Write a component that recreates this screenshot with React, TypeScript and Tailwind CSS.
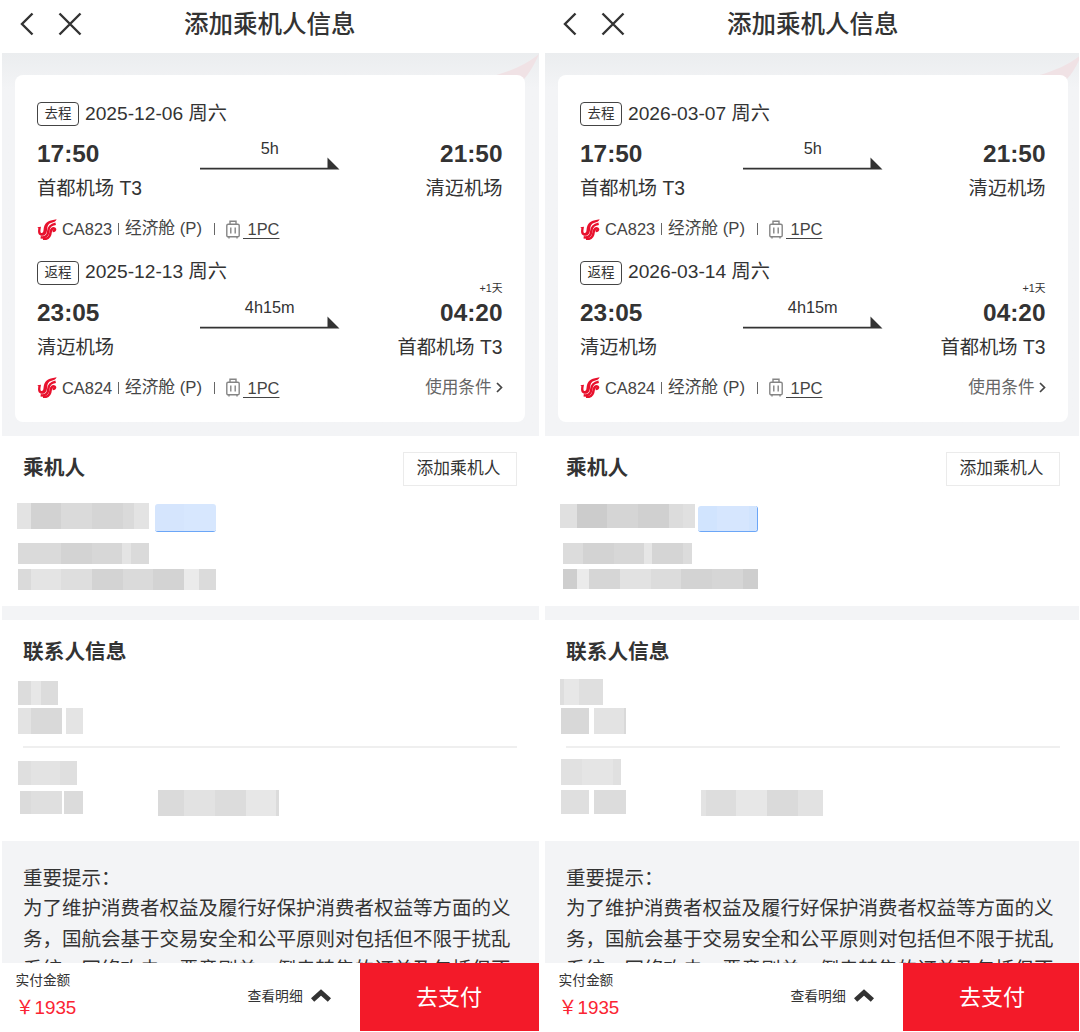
import React from "react";

type TLeg = {
  tag: string;
  date: string;
  from: string;
  to: string;
  depart: string;
  arrive: string;
  duration: string;
  flight: string;
  nextDay?: boolean;
  rules?: boolean;
};

// one masked strip, cells are [width, color]
type TRun = { ml: number; mt?: number; h: number; cells: [number, string][]; blue?: string };
type TRow = { h: number; mt: number; runs: TRun[] };

type TOrder = { legs: TLeg[]; passenger: TRow[]; contactTop: TRow[]; contactBottom: TRow[] };

const makeLegs = (out: string, back: string): TLeg[] => [
  { tag: "去程", date: out, from: "首都机场 T3", to: "清迈机场", depart: "17:50", arrive: "21:50", duration: "5h", flight: "CA823" },
  { tag: "返程", date: back, from: "清迈机场", to: "首都机场 T3", depart: "23:05", arrive: "04:20", duration: "4h15m", flight: "CA824", nextDay: true, rules: true },
];

const orders: TOrder[] = [
  {
    legs: makeLegs("2025-12-06 周六", "2025-12-13 周六"),
    passenger: [
      {
        mt: 3, h: 29,
        runs: [
          { ml: 15, h: 26, cells: [[14, "#e3e3e3"], [30, "#d2d2d2"], [31, "#dadada"], [31, "#d5d5d5"], [11, "#dadada"], [15, "#e3e3e3"]] },
          { ml: 6, mt: 1, h: 28, blue: "border-b-[1.5px] border-[#6ba6f7]", cells: [[29, "#d5e5fd"], [32, "#d7e7fe"]] },
        ],
      },
      { mt: 11, h: 21, runs: [{ ml: 16, h: 21, cells: [[43, "#dadada"], [31, "#d3d3d3"], [30, "#d7d7d7"], [9, "#e4e4e4"], [18, "#dadada"]] }] },
      { mt: 5, h: 21, runs: [{ ml: 16, h: 21, cells: [[13, "#dadada"], [30, "#e4e4e4"], [31, "#dedede"], [31, "#d3d3d3"], [30, "#dadada"], [31, "#d3d3d3"], [15, "#ebebeb"], [17, "#dbdbdb"]] }] },
    ],
    contactTop: [
      { mt: 6, h: 24, runs: [{ ml: 16, h: 24, cells: [[13, "#dcdcdc"], [10, "#e7e7e7"], [17, "#dcdcdc"]] }] },
      { mt: 3, h: 27, runs: [{ ml: 16, h: 26, cells: [[13, "#e3e3e3"], [31, "#d9d9d9"]] }, { ml: 4, h: 26, cells: [[17, "#e4e4e4"]] }] },
    ],
    contactBottom: [
      { mt: 13, h: 24, runs: [{ ml: 16, h: 24, cells: [[13, "#dfdfdf"], [29, "#e3e3e3"], [17, "#dfdfdf"]] }] },
      {
        mt: 5, h: 26,
        runs: [
          { ml: 18, mt: 1, h: 23, cells: [[11, "#dbdbdb"], [31, "#dfdfdf"]] },
          { ml: 2, mt: 1, h: 23, cells: [[19, "#dbdbdb"]] },
          { ml: 75, h: 26, cells: [[26, "#dadada"], [31, "#e2e2e2"], [31, "#dcdcdc"], [30, "#e7e7e7"], [3, "#dbdbdb"]] },
        ],
      },
    ],
  },
  {
    legs: makeLegs("2026-03-07 周六", "2026-03-14 周六"),
    passenger: [
      {
        mt: 3, h: 29,
        runs: [
          { ml: 15, mt: 1, h: 24, cells: [[17, "#e0e0e0"], [30, "#cccccc"], [31, "#d5d5d5"], [31, "#d0d0d0"], [14, "#dcdcdc"], [12, "#e0e0e0"]] },
          { ml: 3, mt: 3, h: 26, blue: "border-b-[1.5px] border-r-[1.5px] border-[#6ba6f7]", cells: [[19, "#d1e4fe"], [32, "#d6e6fe"], [8, "#d1e4fe"]] },
        ],
      },
      { mt: 11, h: 21, runs: [{ ml: 18, h: 21, cells: [[20, "#dcdcdc"], [31, "#d3d3d3"], [30, "#d7d7d7"], [8, "#e6e6e6"], [31, "#d5d5d5"], [9, "#dcdcdc"]] }] },
      { mt: 5, h: 21, runs: [{ ml: 18, h: 20, cells: [[14, "#cecece"], [12, "#ebebeb"], [31, "#d6d6d6"], [31, "#e2e2e2"], [30, "#dcdcdc"], [31, "#d3d3d3"], [31, "#d6d6d6"], [15, "#cecece"]] }] },
    ],
    contactTop: [
      { mt: 4, h: 26, runs: [{ ml: 15, h: 26, cells: [[4, "#dedede"], [15, "#e7e7e7"], [24, "#dfdfdf"]] }] },
      { mt: 3, h: 27, runs: [{ ml: 16, h: 26, cells: [[28, "#d8d8d8"]] }, { ml: 5, h: 26, cells: [[30, "#e3e3e3"], [2, "#d9d9d9"]] }] },
    ],
    contactBottom: [
      { mt: 11, h: 26, runs: [{ ml: 16, h: 26, cells: [[21, "#e1e1e1"], [31, "#e5e5e5"], [8, "#e0e0e0"]] }] },
      {
        mt: 5, h: 26,
        runs: [
          { ml: 16, h: 24, cells: [[28, "#dfdfdf"]] },
          { ml: 5, h: 24, cells: [[32, "#dcdcdc"]] },
          { ml: 75, h: 26, cells: [[5, "#e3e3e3"], [30, "#dddddd"], [31, "#e7e7e7"], [31, "#dadada"], [25, "#e2e2e2"]] },
        ],
      },
    ],
  },
];

function Masked({ rows }: { rows: TRow[] }) {
  return (
    <>
      {rows.map((row, i) => (
        <div key={i} className="flex items-start" style={{ height: row.h, marginTop: row.mt }}>
          {row.runs.map((run, j) => (
            <div
              key={j}
              className={run.blue ? `flex overflow-hidden rounded-[3px] ${run.blue}` : "flex"}
              style={{ height: run.h, marginLeft: run.ml, marginTop: run.mt ?? 0 }}
            >
              {run.cells.map(([w, color], k) => (
                <div key={k} className="h-full" style={{ width: w, backgroundColor: color }} />
              ))}
            </div>
          ))}
        </div>
      ))}
    </>
  );
}

function AirlineLogo() {
  return (
    <svg width="20" height="21" viewBox="0 0 60 63" fill="none" stroke="#e8112d">
      <path d="M1 25L12 23C10 34 9 42 14 42C20 42 19 33 21 24C25 9 38 4 59 1C56 8 50 10 44 11C32 14 31 23 30 34C28 49 20 52 12 50C1 47 3 36 4 28Z" fill="#e8112d" stroke="none" />
      <path d="M11 55C25 57 33 50 34 36C35 21 43 17 56 14" strokeWidth="7.5" />
      <path d="M18 60C34 61 40 51 41 39C42 30 48 25 53 29C56 33 52 36 47 36" strokeWidth="7.5" />
    </svg>
  );
}

function Suitcase() {
  return (
    <svg width="14" height="19" viewBox="0 0 14 19" fill="none" stroke="#858585" strokeWidth="1.4">
      <rect x="0.8" y="4.2" width="12.4" height="12.6" rx="1.4" />
      <path d="M4 4V1.3H10V4M4.8 7.5V13.5M9.2 7.5V13.5M3 17V18.5M11 17V18.5" />
    </svg>
  );
}

function Leg({ leg }: { leg: TLeg }) {
  return (
    <div className="h-[158.5px] pl-[22px] pr-[22.5px]">
      <div className="flex h-[27px] items-center">
        <span className="mt-px flex h-[24px] w-[42px] items-center justify-center rounded-[4px] border-[1.5px] border-[#444] text-[13.5px] leading-none">
          {leg.tag}
        </span>
        <span className="-mt-px ml-[6px] text-[19.2px] leading-[27px]">{leg.date}</span>
      </div>
      <div className="flex h-[88px] justify-between pt-[10px]">
        <div className="w-[163px]">
          <div className="text-[24.4px] leading-[33px] font-bold">{leg.depart}</div>
          <div className="mt-[5px] text-[19.3px] leading-[28px]">{leg.from}</div>
        </div>
        <div className="w-[140px]">
          <div className="pt-[1px] text-center text-[16.3px] leading-[20px]">{leg.duration}</div>
          <svg className="-mt-px" width="140" height="13" viewBox="0 0 140 13" fill="#333">
            <path d="M0 10.8H127.5V0.5L139.5 12.5H0Z" />
          </svg>
        </div>
        <div className="relative w-[163px] text-right">
          {leg.nextDay && <span className="absolute right-0 -top-[16px] text-[10.8px] leading-[16px]">+1天</span>}
          <div className="text-[24.4px] leading-[33px] font-bold">{leg.arrive}</div>
          <div className="mt-[5px] text-[19.3px] leading-[28px]">{leg.to}</div>
        </div>
      </div>
      <div className="-mt-px flex h-[30px] items-center text-[16.4px] leading-[30px] text-[#444]">
        <AirlineLogo />
        <span className="ml-[5px] w-[50px]">{leg.flight}</span>
        <span className="ml-[5.5px] h-[12px] w-[1.5px] bg-[#666]" />
        <span className="ml-[6px] w-[83px] text-[16.7px] whitespace-nowrap">经济舱 (P)</span>
        <span className="ml-[5.5px] mr-[11px] h-[12px] w-[1.5px] bg-[#666]" />
        <Suitcase />
        <span className="ml-[3px] whitespace-pre underline underline-offset-[3px] decoration-1"> 1PC</span>
        {leg.rules && (
          <span className="ml-auto flex items-center text-[16.6px] text-[#666]">
            使用条件
            <svg className="ml-[4px]" width="7" height="11" viewBox="0 0 7 11" fill="none" stroke="#444" strokeWidth="1.7">
              <path d="M1 1L5.5 5.5L1 10" />
            </svg>
          </span>
        )}
      </div>
    </div>
  );
}

function Phone({ order }: { order: TOrder }) {
  return (
    <div className="flex h-[1031px] w-[536.5px] shrink-0 flex-col bg-white">
      <header className="flex h-[53px] shrink-0 items-center">
        <div className="flex w-[182px] items-center pl-[18px] pb-[6px]">
          <svg width="14" height="24" viewBox="0 0 14 24" fill="none" stroke="#333" strokeWidth="2.4">
            <path d="M12.5 1.5L2 12L12.5 22.5" />
          </svg>
          <svg className="ml-[24px]" width="24" height="24" viewBox="0 0 24 24" fill="none" stroke="#333" strokeWidth="2.4">
            <path d="M1.5 1.5L22.5 22.5M22.5 1.5L1.5 22.5" />
          </svg>
        </div>
        <h1 className="pb-[4px] text-[24.5px] leading-[36px] font-medium">添加乘机人信息</h1>
      </header>

      <section className="relative h-[383px] shrink-0 bg-[#f3f4f6] bg-linear-to-b from-[#ebedef] to-[#f3f4f6] to-[36px] px-[13px] pt-[22px]">
        <svg className="absolute top-[1px] right-0" width="46" height="27" viewBox="0 0 46 27" fill="#f0e2e5">
          <path d="M46 0C34 10 20 16 2 21.5L30 26C37 19 42 9 46 0Z" />
        </svg>
        <div className="relative h-[347px] w-[510px] rounded-[8px] bg-white pt-[25px]">
          {order.legs.map((leg) => (
            <Leg key={leg.flight} leg={leg} />
          ))}
        </div>
      </section>

      <section className="h-[170px] shrink-0">
        <div className="flex h-[64px] items-center justify-between pl-[21px] pr-[22px]">
          <h2 className="text-[20.7px] leading-[30px] font-bold">乘机人</h2>
          <button className="mt-px h-[34px] w-[114px] border border-[#ebebeb] pr-[2px] pt-px text-[16.8px]">添加乘机人</button>
        </div>
        <Masked rows={order.passenger} />
      </section>
      <div className="h-[14px] shrink-0 bg-[#f3f4f6]" />

      <section className="h-[221px] shrink-0">
        <div className="flex h-[55px] items-center pt-[8px] pl-[21px]">
          <h2 className="text-[20.7px] leading-[30px] font-bold">联系人信息</h2>
        </div>
        <Masked rows={order.contactTop} />
        <div className="mt-[11px] ml-[21px] h-[2px] w-[494px] bg-[#efefef]" />
        <Masked rows={order.contactBottom} />
      </section>

      <section className="h-[122px] shrink-0 overflow-hidden bg-[#f3f4f6] pt-[22px] pl-[21px] text-[19.5px] leading-[30.3px]">
        <p>重要提示：</p>
        <p className="w-[490px]">
          为了维护消费者权益及履行好保护消费者权益等方面的义务，国航会基于交易安全和公平原则对包括但不限于扰乱系统、网络攻击、恶意刷单、倒卖转售的订单及包括但不
        </p>
      </section>

      <footer className="flex h-[68px] shrink-0">
        <div className="flex-1 pt-[8px] pl-[13.5px]">
          <div className="text-[13.7px] leading-[20px]">实付金额</div>
          <div className="mt-[4px] flex text-[18.8px] leading-[26px] text-[#fb2433]">
            <span className="w-[19px]">￥</span>
            <span>1935</span>
          </div>
        </div>
        <div className="flex w-[112px] items-center text-[13.8px]">
          查看明细
          <svg className="-mt-[3px] ml-[8px]" width="20" height="13" viewBox="0 0 20 13" fill="none" stroke="#333" strokeWidth="4.8">
            <path d="M1.6 11L10 3.4L18.4 11" />
          </svg>
        </div>
        <button className="h-[68px] w-[179px] bg-[#f31a29] pt-px text-[22px] text-white">去支付</button>
      </footer>
    </div>
  );
}

function App() {
  return (
    <div className="h-[1032px] w-[1079px] overflow-hidden bg-white pl-[2px] text-[#333] font-['Liberation_Sans','Noto_Sans_CJK_SC',sans-serif]">
      <div className="flex gap-[6.5px]">
        {orders.map((order, i) => (
          <Phone key={i} order={order} />
        ))}
      </div>
    </div>
  );
}

export default App;
